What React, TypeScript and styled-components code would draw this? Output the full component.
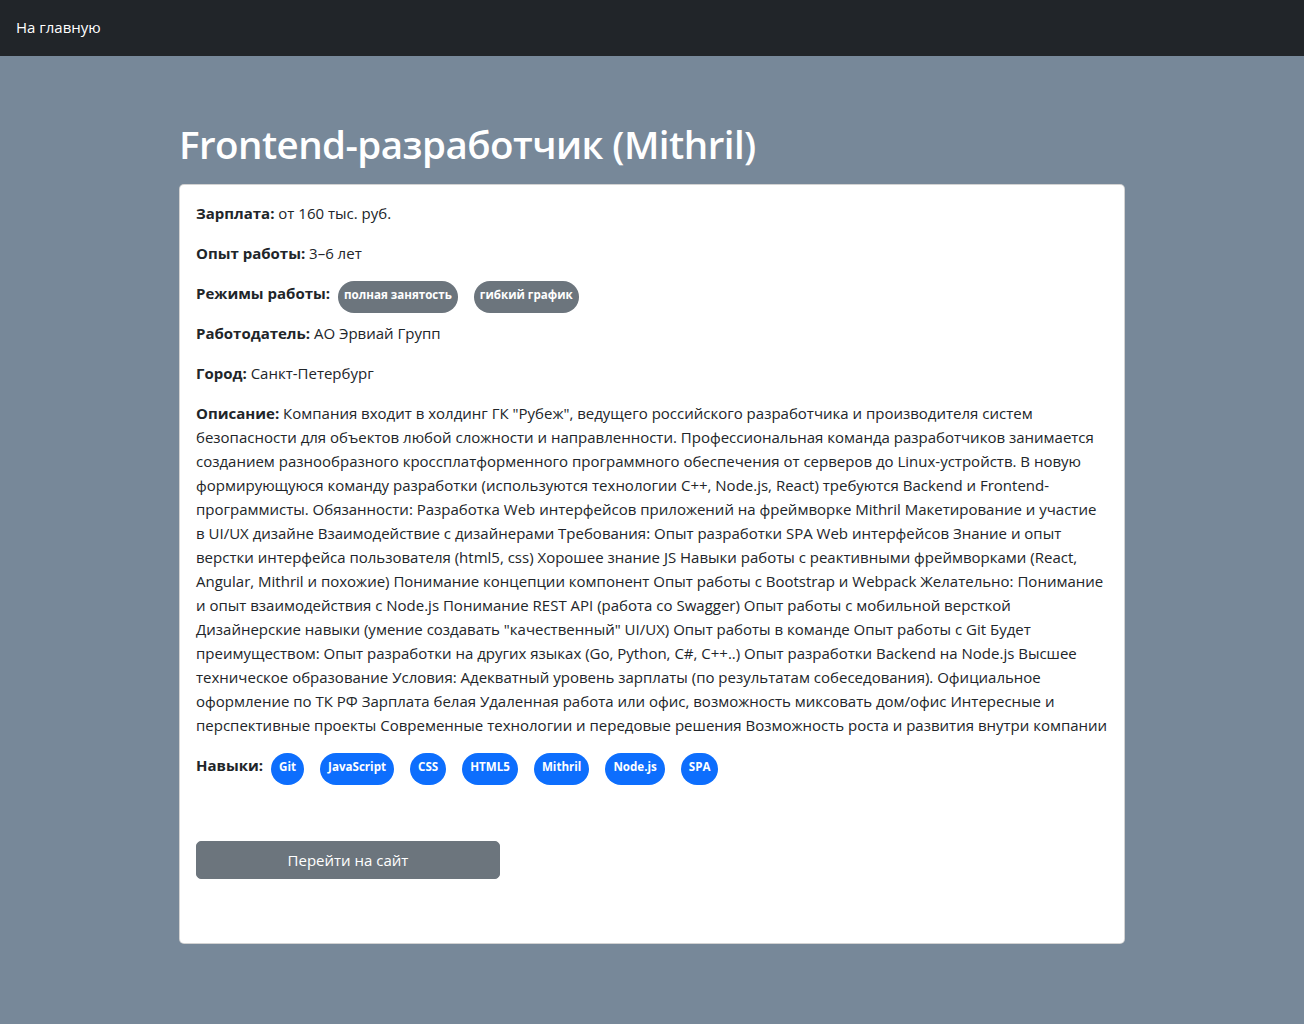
import React from "react";
import styled, { createGlobalStyle } from "styled-components";

const GlobalStyle = createGlobalStyle`
  html, body {
    margin: 0;
    padding: 0;
    background: #778899;
    font-family: "Open Sans", "Noto Sans", sans-serif;
    font-size: 15px;
    line-height: 24px;
    color: #212529;
  }
  * { box-sizing: border-box; }
`;

const Navbar = styled.nav`
  height: 56px;
  background: #212529;
  display: flex;
  align-items: center;
  padding: 0 16px 3px;
`;

const NavLink = styled.a`
  color: #ffffff;
  text-decoration: none;
  font-size: 15px;
  line-height: 24px;
`;

const Main = styled.main`
  width: 946px;
  margin: 0 auto;
  padding: 65px 0 80px;
`;

const Title = styled.h1`
  margin: 0 0 16px;
  font-size: 38.5px;
  line-height: 47px;
  font-weight: 600;
  letter-spacing: -0.55px;
  color: #ffffff;
`;

const Card = styled.section`
  background: #ffffff;
  border: 1px solid rgba(0, 0, 0, 0.175);
  border-radius: 5px;
  padding: 16px;
  display: flex;
  flex-direction: column;
`;

const Row = styled.p<{ $nowrap?: boolean }>`
  margin: 0 0 16px;
  font-size: 15px;
  line-height: 24px;
  white-space: ${(p) => (p.$nowrap ? "nowrap" : "normal")};
`;

const Label = styled.b`
  font-weight: 700;
`;

const Badge = styled.span<{ $tone: "secondary" | "primary" }>`
  display: inline-block;
  height: 32px;
  line-height: 28px;
  padding: 0 ${(p) => (p.$tone === "primary" ? "8px" : "6px")} 4px;
  margin: -1px 0 -8px 8px;
  border-radius: 16px;
  font-size: 11.6px;
  font-weight: 700;
  color: #ffffff;
  white-space: nowrap;
  background: ${(p) => (p.$tone === "primary" ? "#0d6efd" : "#6c757d")};
  & + & {
    margin-left: 16px;
  }
`;

const ButtonRow = styled.div`
  margin: 48px 0;
`;

const SiteButton = styled.a`
  display: block;
  width: 304px;
  height: 38px;
  line-height: 36px;
  border: 1px solid #6c757d;
  border-radius: 5px;
  background: #6c757d;
  color: #ffffff;
  text-align: center;
  text-decoration: none;
  font-size: 15px;
`;

const descriptionLines = [
  "Компания входит в холдинг ГК \"Рубеж\", ведущего российского разработчика и производителя систем",
  "безопасности для объектов любой сложности и направленности. Профессиональная команда разработчиков занимается",
  "созданием разнообразного кроссплатформенного программного обеспечения от серверов до Linux-устройств. В новую",
  "формирующуюся команду разработки (используются технологии C++, Node.js, React) требуются Backend и Frontend-",
  "программисты. Обязанности: Разработка Web интерфейсов приложений на фреймворке Mithril Макетирование и участие",
  "в UI/UX дизайне Взаимодействие с дизайнерами Требования: Опыт разработки SPA Web интерфейсов Знание и опыт",
  "верстки интерфейса пользователя (html5, css) Хорошее знание JS Навыки работы с реактивными фреймворками (React,",
  "Angular, Mithril и похожие) Понимание концепции компонент Опыт работы с Bootstrap и Webpack Желательно: Понимание",
  "и опыт взаимодействия с Node.js Понимание REST API (работа со Swagger) Опыт работы с мобильной версткой",
  "Дизайнерские навыки (умение создавать \"качественный\" UI/UX) Опыт работы в команде Опыт работы с Git Будет",
  "преимуществом: Опыт разработки на других языках (Go, Python, C#, C++..) Опыт разработки Backend на Node.js Высшее",
  "техническое образование Условия: Адекватный уровень зарплаты (по результатам собеседования). Официальное",
  "оформление по ТК РФ Зарплата белая Удаленная работа или офис, возможность миксовать дом/офис Интересные и",
  "перспективные проекты Современные технологии и передовые решения Возможность роста и развития внутри компании",
];

const modes = ["полная занятость", "гибкий график"];
const skills = ["Git", "JavaScript", "CSS", "HTML5", "Mithril", "Node.js", "SPA"];

export default function App() {
  return (
    <>
      <GlobalStyle />
      <Navbar>
        <NavLink href="#">На главную</NavLink>
      </Navbar>
      <Main>
        <Title>Frontend-разработчик (Mithril)</Title>
        <Card>
          <Row>
            <Label>Зарплата:</Label> от 160 тыс. руб.
          </Row>
          <Row>
            <Label>Опыт работы:</Label> 3–6 лет
          </Row>
          <Row>
            <Label>Режимы работы:</Label>
            {modes.map((m) => (
              <Badge key={m} $tone="secondary">
                {m}
              </Badge>
            ))}
          </Row>
          <Row>
            <Label>Работодатель:</Label> АО Эрвиай Групп
          </Row>
          <Row>
            <Label>Город:</Label> Санкт-Петербург
          </Row>
          <Row $nowrap>
            <Label>Описание:</Label>{" "}
            {descriptionLines.map((line, i) => (
              <React.Fragment key={i}>
                {line}
                {i < descriptionLines.length - 1 && <br />}
              </React.Fragment>
            ))}
          </Row>
          <Row>
            <Label>Навыки:</Label>
            {skills.map((s) => (
              <Badge key={s} $tone="primary">
                {s}
              </Badge>
            ))}
          </Row>
          <ButtonRow>
            <SiteButton href="#">Перейти на сайт</SiteButton>
          </ButtonRow>
        </Card>
      </Main>
    </>
  );
}
